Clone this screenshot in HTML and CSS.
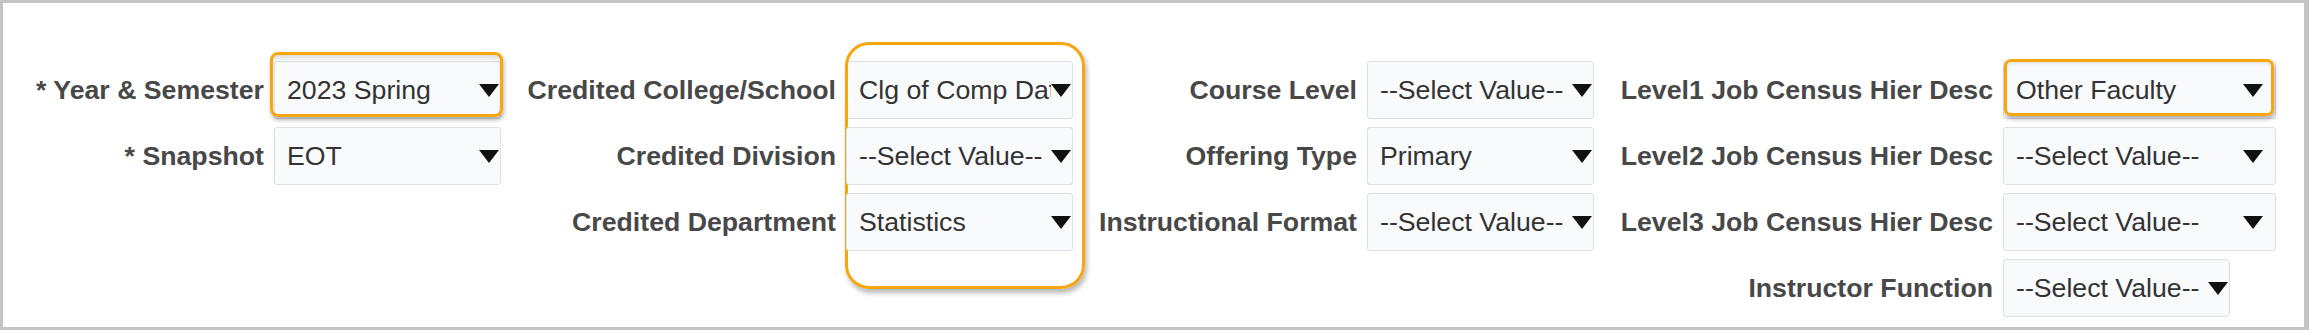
FILE: index.html
```html
<!DOCTYPE html>
<html lang="en">
<head>
<meta charset="utf-8">
<title>Filters</title>
<link rel="stylesheet" href="styles.css">
</head>
<body>
<div class="frame">
  <div class="groups">
    <div class="group g1">
      <div class="label">* Year &amp; Semester</div>
      <div class="select">
        <span class="value">2023 Spring</span>
        <svg class="arrow" viewBox="0 0 20 13"><polygon points="0,0 20,0 10,13"/></svg>
        <div class="hl hl-year"></div>
      </div>
      <div class="label">* Snapshot</div>
      <div class="select">
        <span class="value">EOT</span>
        <svg class="arrow" viewBox="0 0 20 13"><polygon points="0,0 20,0 10,13"/></svg>
      </div>
    </div>

    <div class="group g2">
      <div class="label">Credited College/School</div>
      <div class="select">
        <span class="value">Clg of Comp Data Science</span>
        <svg class="arrow" viewBox="0 0 20 13"><polygon points="0,0 20,0 10,13"/></svg>
        <div class="hl hl-credited"></div>
      </div>
      <div class="label">Credited Division</div>
      <div class="select">
        <span class="value">--Select Value--</span>
        <svg class="arrow" viewBox="0 0 20 13"><polygon points="0,0 20,0 10,13"/></svg>
      </div>
      <div class="label">Credited Department</div>
      <div class="select">
        <span class="value">Statistics</span>
        <svg class="arrow" viewBox="0 0 20 13"><polygon points="0,0 20,0 10,13"/></svg>
      </div>
    </div>

    <div class="group g3">
      <div class="label">Course Level</div>
      <div class="select">
        <span class="value">--Select Value--</span>
        <svg class="arrow" viewBox="0 0 20 13"><polygon points="0,0 20,0 10,13"/></svg>
      </div>
      <div class="label">Offering Type</div>
      <div class="select">
        <span class="value">Primary</span>
        <svg class="arrow" viewBox="0 0 20 13"><polygon points="0,0 20,0 10,13"/></svg>
      </div>
      <div class="label">Instructional Format</div>
      <div class="select">
        <span class="value">--Select Value--</span>
        <svg class="arrow" viewBox="0 0 20 13"><polygon points="0,0 20,0 10,13"/></svg>
      </div>
    </div>

    <div class="group g4">
      <div class="label">Level1 Job Census Hier Desc</div>
      <div class="select wide">
        <span class="value">Other Faculty</span>
        <svg class="arrow" viewBox="0 0 20 13"><polygon points="0,0 20,0 10,13"/></svg>
        <div class="hl hl-level"></div>
      </div>
      <div class="label">Level2 Job Census Hier Desc</div>
      <div class="select wide">
        <span class="value">--Select Value--</span>
        <svg class="arrow" viewBox="0 0 20 13"><polygon points="0,0 20,0 10,13"/></svg>
      </div>
      <div class="label">Level3 Job Census Hier Desc</div>
      <div class="select wide">
        <span class="value">--Select Value--</span>
        <svg class="arrow" viewBox="0 0 20 13"><polygon points="0,0 20,0 10,13"/></svg>
      </div>
      <div class="label">Instructor Function</div>
      <div class="select">
        <span class="value">--Select Value--</span>
        <svg class="arrow" viewBox="0 0 20 13"><polygon points="0,0 20,0 10,13"/></svg>
      </div>
    </div>
  </div>
</div>
</body>
</html>
```

FILE: styles.css
```css
html, body {
  margin: 0;
  padding: 0;
  background: #ffffff;
}

.frame {
  box-sizing: border-box;
  width: 2309px;
  height: 330px;
  border-style: solid;
  border-color: #c4c4c4;
  border-width: 3px 5px 3px 3px;
  background: #ffffff;
  padding: 58px 0 0 30px;
  font-family: "Liberation Sans", Arial, sans-serif;
  font-size: 26.7px;
}

.groups {
  display: flex;
  align-items: flex-start;
  gap: 24px;
}

.group {
  display: grid;
  column-gap: 10px;
  row-gap: 8px;
  grid-auto-rows: 58px;
}

.g1 { grid-template-columns: 231px 227px; }
.g2 { grid-template-columns: 311px 227px; }
.g3 { grid-template-columns: 260px 227px; }
.g4 { grid-template-columns: 375px auto; }

.label {
  display: flex;
  align-items: center;
  justify-content: flex-end;
  white-space: nowrap;
  font-weight: bold;
  color: #484848;
}

.select {
  position: relative;
  box-sizing: border-box;
  width: 227px;
  height: 58px;
  display: flex;
  align-items: center;
  padding: 0 1px 0 12px;
  background: #f9fafc;
  border: 1px solid #dde1e4;
  border-radius: 3px;
  color: #333333;
}

.select.wide {
  width: 273px;
  padding-right: 12px;
}

.value {
  flex: 1;
  min-width: 0;
  overflow: hidden;
  white-space: nowrap;
}

.arrow {
  flex: none;
  width: 20px;
  height: 13px;
  fill: #111111;
}

.hl {
  position: absolute;
  box-sizing: border-box;
  border: 3px solid #f6a70f;
  pointer-events: none;
}

.hl-year {
  left: -5px;
  top: -10px;
  width: 233px;
  height: 65px;
  border-radius: 8px;
  box-shadow: 1px 3px 4px rgba(0, 0, 0, 0.3), inset 0 6px 6px -3px rgba(0, 0, 0, 0.16);
}

.hl-credited {
  left: -2px;
  top: -20px;
  width: 240px;
  height: 247px;
  border-radius: 24px;
  box-shadow: 2px 4px 5px rgba(0, 0, 0, 0.28);
}

.hl-level {
  left: 0px;
  top: -3px;
  width: 270px;
  height: 57px;
  border-radius: 7px;
  box-shadow: 1px 3px 4px rgba(0, 0, 0, 0.3), inset 0 4px 5px -3px rgba(0, 0, 0, 0.12);
}
```
